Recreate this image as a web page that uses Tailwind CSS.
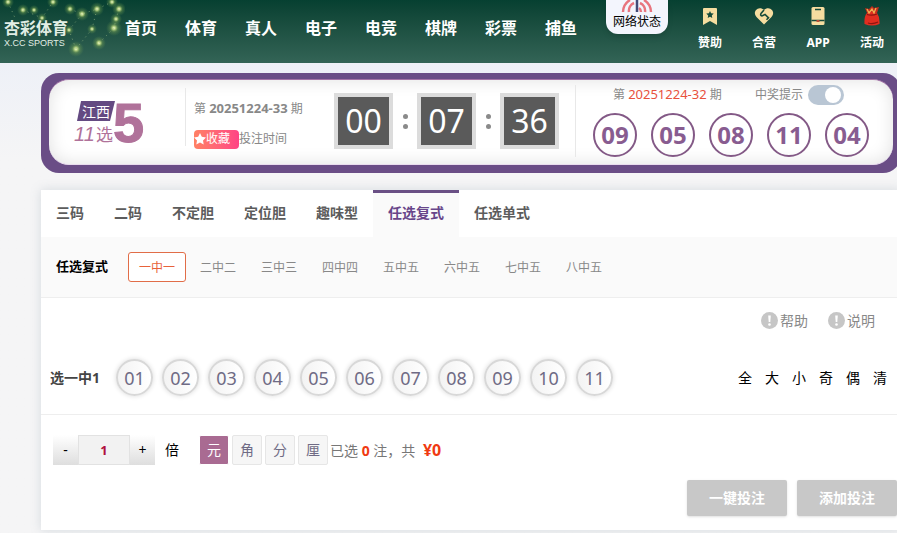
<!DOCTYPE html>
<html lang="zh-CN">
<head>
<meta charset="utf-8">
<meta name="viewport" content="width=device-width, initial-scale=1">
<title>江西11选5</title>
<script src="https://cdn.jsdelivr.net/npm/@tailwindcss/browser@4"></script>
</head>
<body class="min-h-screen overflow-x-hidden bg-linear-to-b from-[#edf0f7] from-10% to-[#f5f5f6] to-30% text-sm leading-5 text-[#888] [font-family:'Noto_Sans','Noto_Sans_CJK_SC',sans-serif]">

<header class="relative flex h-[63px] items-start bg-linear-to-b from-[#064031] to-[#336456] text-white">
  <svg class="absolute left-0 top-0" width="125" height="60" viewBox="0 0 125 60" aria-hidden="true">
    <defs><radialGradient id="glow"><stop offset="0" stop-color="#f4ffd0"/><stop offset=".22" stop-color="#c5df88" stop-opacity=".85"/><stop offset=".5" stop-color="#8cb558" stop-opacity=".35"/><stop offset="1" stop-color="#6fa050" stop-opacity="0"/></radialGradient></defs>
    <g fill="url(#glow)">
      <circle cx="8" cy="2" r="6"/><circle cx="23" cy="10" r="6"/><circle cx="34" cy="10" r="5"/><circle cx="53" cy="2" r="6"/><circle cx="42" cy="18" r="5"/><circle cx="70" cy="9" r="6"/><circle cx="82" cy="14" r="7"/><circle cx="97" cy="9" r="7"/><circle cx="112" cy="2" r="6"/><circle cx="119" cy="9" r="7"/><circle cx="116" cy="19" r="6"/><circle cx="114" cy="28" r="8"/><circle cx="99" cy="43" r="7"/><circle cx="76" cy="49" r="8"/><circle cx="92" cy="29" r="5"/><circle cx="69" cy="30" r="5"/>
    </g>
    <g fill="none" stroke="#a9c58d" stroke-opacity=".6" stroke-dasharray="1 4">
      <path d="M8 2 15 18M23 10 42 18 53 2M70 9 82 14 97 9 112 2M76 49 69 30 82 14M76 49 92 29 97 9M99 43 114 28 116 19 119 9"/>
    </g>
  </svg>
  <a href="#" class="relative mt-[18px] ml-1 w-[121px] shrink-0">
    <span class="block text-base leading-5 font-bold text-[#e2eee5]">杏彩体育</span>
    <span class="block text-[9px] leading-[10px] text-[#e2eee5] [font-family:'Liberation_Sans',sans-serif]">X.CC SPORTS</span>
  </a>
  <nav class="mt-4 flex gap-7 text-base leading-6 font-bold whitespace-nowrap">
    <a href="#">首页</a><a href="#">体育</a><a href="#">真人</a><a href="#">电子</a><a href="#">电竞</a><a href="#">棋牌</a><a href="#">彩票</a><a href="#">捕鱼</a>
  </nav>
  <div class="-mr-[2px] ml-auto flex shrink-0">
    <a href="#" class="mr-[15px] flex h-[34px] w-[62px] flex-col items-center justify-between rounded-b-xl bg-[#f3f5fd] pb-1 text-xs leading-4 text-black shadow-md">
      <svg width="32" height="13" viewBox="0 0 32 13" fill="none" aria-hidden="true">
        <path d="M2 12A14.500 14.500 0 0 1 9 0M8 12A8.500 8.500 0 0 1 13 3M30 12A14.500 14.500 0 0 0 23 0M24 12A8.500 8.500 0 0 0 19 3M20 12A5 5 0 0 0 18 8" stroke="#e8747e" stroke-width="2.500"/>
        <path d="M16 0v12" stroke="#414b78" stroke-width="2.500"/>
      </svg>
      网络状态
    </a>
    <a href="#" class="flex w-[54px] flex-col items-center gap-[9px] pt-[6px] text-xs leading-4 font-bold">
      <svg width="20" height="20" viewBox="0 0 20 20" aria-hidden="true"><path d="M3 3q0-1 1-1h12q1 0 1 1v16l-7-4-7 4z" fill="#f6dda0"/><path d="m10 5 1.100 2.300 2.600.3-1.900 1.800.5 2.600-2.300-1.300L7.700 12l.5-2.600-1.900-1.800 2.600-.3z" fill="#174b3b"/></svg>赞助
    </a>
    <a href="#" class="flex w-[54px] flex-col items-center gap-[9px] pt-[6px] text-xs leading-4 font-bold">
      <svg width="20" height="20" viewBox="0 0 20 20" aria-hidden="true"><path d="M10 18.500 2.500 11Q-.5 7.500 1.800 4.200C4 1.500 7.500 1.500 10 4c2.500-2.500 6-2.500 8.200.2Q20.500 7.500 17.500 11z" fill="#f6dda0"/><path d="M10 4 7 7.500q-1 2 1 2.400l3-1.400 3.500 3.300-2 2" fill="none" stroke="#174b3b" stroke-width="1.600"/></svg>合营
    </a>
    <a href="#" class="flex w-[54px] flex-col items-center gap-[9px] pt-[6px] text-xs leading-4 font-bold">
      <svg width="20" height="20" viewBox="0 0 20 20" aria-hidden="true"><rect x="3.500" y="1" width="13" height="18" rx="1.500" fill="#f6dda0"/><path d="M7 3.500h6M3.500 14.500h13" stroke="#174b3b" stroke-width="1.400"/><path d="M8.500 14h3v2h-3z" fill="#b8503a"/></svg>APP
    </a>
    <a href="#" class="flex w-[54px] flex-col items-center gap-[9px] pt-[6px] text-xs leading-4 font-bold">
      <svg width="20" height="20" viewBox="0 0 20 20" aria-hidden="true"><path d="M5 7 3 2l4 1 3-3 2 2 5-1-2 6z" fill="#c32b1c"/><path d="M5 7q5-2 10 0 3 4 2.500 11Q10 21 2.500 18 2 10 5 7z" fill="#e12d20"/><path d="m5 3 2 4 3-4 2 4 2-5" fill="none" stroke="#efb052" stroke-width="1.300"/><path d="M5 8.500q5 1.500 10-.5M6 17q5 1.500 10-1" fill="none" stroke="#8e1510" stroke-width="1.300"/></svg>活动
    </a>
  </div>
</header>

<main class="mt-[10px] -mr-1 ml-[41px]">
  <section class="rounded-[18px] bg-[#6a4d86] px-2 pt-[6px] pb-2">
    <div class="flex h-[86px] items-start rounded-[20px] border-y border-t-[#a273a6] border-b-[#e9dcee] bg-white shadow-[inset_0_0_18px_rgba(0,0,0,0.12)]">
      <div class="mt-2 flex h-[58px] w-[137px] shrink-0 items-center border-r border-[#e8e8e8] pt-3 pl-[26px]">
        <svg class="overflow-visible" width="72" height="50" viewBox="0 0 72 50" role="img" aria-label="江西11选5">
          <path d="M6 3h34l-5 20H2z" fill="#644a82"/>
          <text x="7" y="19" font-size="14" fill="#fff" font-family="Noto Sans CJK SC, sans-serif">江西</text>
          <text x="-1" y="43" font-size="20" font-style="italic" fill="#b0729a" font-family="Liberation Sans, sans-serif">11</text>
          <text x="21" y="43" font-size="17" fill="#b0729a" font-family="Noto Sans CJK SC, sans-serif">选</text>
          <text x="38" y="44" font-size="56" font-weight="bold" fill="#b0729a" stroke="#b0729a" stroke-width="1" font-family="Liberation Sans, sans-serif">5</text>
        </svg>
      </div>
      <div class="w-[148px] shrink-0 pt-[18px] pl-2 text-[12px]">
        <p class="whitespace-nowrap">第 <b class="text-[13px]">20251224-33</b> 期</p>
        <p class="mt-[10px] flex items-center whitespace-nowrap">
          <button class="flex h-[19px] w-[45px] items-center rounded-sm bg-linear-to-r from-[#ff8064] to-[#ff4385] text-white">
            <svg width="12" height="12" viewBox="0 0 12 12" fill="#fff" aria-hidden="true"><path d="m6 0 1.800 3.800 4.200.6-3 3 .7 4.200L6 9.600l-3.700 2 .7-4.200-3-3 4.200-.6z"/></svg>收藏
          </button>投注时间
        </p>
      </div>
      <div class="mt-[13px] flex w-[241px] shrink-0 items-center text-[32px] leading-[48px] text-white" role="timer">
        <span class="h-14 w-[59px] border-4 border-[#dcdcdc] bg-[#5a5a5a] text-center">00</span>
        <span class="flex w-6 flex-col items-center gap-[5px]"><i class="size-[5px] rounded-full bg-[#8a8a8a]"></i><i class="size-[5px] rounded-full bg-[#8a8a8a]"></i></span>
        <span class="h-14 w-[59px] border-4 border-[#dcdcdc] bg-[#5a5a5a] text-center">07</span>
        <span class="flex w-6 flex-col items-center gap-[5px]"><i class="size-[5px] rounded-full bg-[#8a8a8a]"></i><i class="size-[5px] rounded-full bg-[#8a8a8a]"></i></span>
        <span class="h-14 w-[59px] border-4 border-[#dcdcdc] bg-[#5a5a5a] text-center">36</span>
      </div>
      <div class="mt-[5px] border-l border-[#e8e8e8] pl-[17px]">
        <div class="flex h-5 items-center pl-5 text-xs whitespace-nowrap">
          <p class="w-[142px]">第 <span class="text-[13px] text-[#e8513c]">20251224-32</span> 期</p>
          <label for="win-tip" class="mr-[5px]">中奖提示</label>
          <input id="win-tip" type="checkbox" role="switch" checked class="h-5 w-9 appearance-none rounded-full bg-[#b9c6d4] before:mt-[2px] before:ml-[17px] before:block before:size-4 before:rounded-full before:bg-white">
        </div>
        <ul class="mt-2 flex gap-[14px] text-2xl leading-10 font-bold text-[#885c90]">
          <li class="size-11 rounded-full border-2 border-[#835986] text-center">09</li>
          <li class="size-11 rounded-full border-2 border-[#835986] text-center">05</li>
          <li class="size-11 rounded-full border-2 border-[#835986] text-center">08</li>
          <li class="size-11 rounded-full border-2 border-[#835986] text-center">11</li>
          <li class="size-11 rounded-full border-2 border-[#835986] text-center">04</li>
        </ul>
      </div>
    </div>
  </section>

  <section class="mt-[17px] bg-white pb-[14px] shadow-[0_0_10px_rgba(120,140,155,0.25)]">
    <nav class="flex h-[47px] font-bold whitespace-nowrap text-[#5c5c5c]">
      <a href="#" class="px-[15px] py-[13px]">三码</a>
      <a href="#" class="px-[15px] py-[13px]">二码</a>
      <a href="#" class="px-[15px] py-[13px]">不定胆</a>
      <a href="#" class="px-[15px] py-[13px]">定位胆</a>
      <a href="#" class="px-[15px] py-[13px]">趣味型</a>
      <a href="#" aria-current="page" class="border-t-3 border-[#6a5085] bg-[#fafafa] px-[15px] py-[10px] text-[#68468a]">任选复式</a>
      <a href="#" class="px-[15px] py-[13px]">任选单式</a>
    </nav>
    <div class="flex h-[61px] items-center gap-[3px] border-b border-[#eeeeee] bg-[#fafafa] pl-[15px] text-xs whitespace-nowrap">
      <b class="w-[69px] text-[13px] text-black">任选复式</b>
      <button class="h-[30px] w-[58px] rounded-[3px] border border-[#e16d48] bg-white pt-[2px] text-[#e8623a]">一中一</button>
      <button class="h-[30px] w-[58px] pt-[2px]">二中二</button>
      <button class="h-[30px] w-[58px] pt-[2px]">三中三</button>
      <button class="h-[30px] w-[58px] pt-[2px]">四中四</button>
      <button class="h-[30px] w-[58px] pt-[2px]">五中五</button>
      <button class="h-[30px] w-[58px] pt-[2px]">六中五</button>
      <button class="h-[30px] w-[58px] pt-[2px]">七中五</button>
      <button class="h-[30px] w-[58px] pt-[2px]">八中五</button>
    </div>
    <div class="flex h-[45px] items-center justify-end gap-5 pr-[26px]">
      <a href="#" class="flex items-center gap-[2px]"><svg width="17" height="17" viewBox="0 0 17 17" aria-hidden="true"><circle cx="8.500" cy="8.500" r="8.500" fill="#c6c6c6"/><path d="M7.200 3.500h2.600l-.5 6.500H7.700z" fill="#fff"/><circle cx="8.500" cy="12.500" r="1.300" fill="#fff"/></svg>帮助</a>
      <a href="#" class="flex items-center gap-[2px]"><svg width="17" height="17" viewBox="0 0 17 17" aria-hidden="true"><circle cx="8.500" cy="8.500" r="8.500" fill="#c6c6c6"/><path d="M7.200 3.500h2.600l-.5 6.500H7.700z" fill="#fff"/><circle cx="8.500" cy="12.500" r="1.300" fill="#fff"/></svg>说明</a>
    </div>
    <div class="flex h-[72px] items-center border-b border-[#eeeeee] pr-[14px] pb-[2px] pl-[9px]">
      <b class="w-[66px] text-[#444]">选一中1</b>
      <div class="flex gap-[9px] text-lg leading-none text-[#6f6b85] [&>button]:size-[37px] [&>button]:rounded-full [&>button]:border-2 [&>button]:border-[#d8d8d8] [&>button]:bg-linear-to-r [&>button]:from-[#f3f3f3] [&>button]:to-white [&>button]:shadow-[0_0_5px_rgba(0,0,0,0.15)]">
        <button>01</button><button>02</button><button>03</button><button>04</button><button>05</button><button>06</button><button>07</button><button>08</button><button>09</button><button>10</button><button>11</button>
      </div>
      <div class="ml-auto flex gap-[13px] text-black">
        <button>全</button><button>大</button><button>小</button><button>奇</button><button>偶</button><button>清</button>
      </div>
    </div>
    <div class="flex items-center pt-5 pl-3 whitespace-nowrap">
      <button class="h-[30px] w-[25px] bg-linear-to-b from-white to-[#dedede] text-black" aria-label="减少">-</button>
      <input type="text" value="1" aria-label="倍数" class="h-[30px] w-[52px] border border-[#e2e2e2] bg-[#f2f2f2] text-center text-[13px] font-bold text-[#b0103f]">
      <button class="h-[30px] w-[25px] bg-linear-to-b from-white to-[#dedede] text-black" aria-label="增加">+</button>
      <span class="ml-[10px] w-[34px] text-black">倍</span>
      <div class="flex gap-[3px] text-[#6f6b85]">
        <button class="size-[30px] rounded-xs border border-white bg-[#a96b92] text-white">元</button>
        <button class="size-[30px] rounded-xs border border-[#e6e6e6] bg-[#f6f6f6]">角</button>
        <button class="size-[30px] rounded-xs border border-[#e6e6e6] bg-[#f6f6f6]">分</button>
        <button class="size-[30px] rounded-xs border border-[#e6e6e6] bg-[#f6f6f6]">厘</button>
      </div>
      <p class="ml-[2px] text-[#777]">已选 <b class="text-[#f03a12]">0</b> 注，共 <b class="ml-1 text-base text-[#f03a12]">¥0</b></p>
    </div>
    <div class="mt-[15px] flex justify-end gap-[10px] pr-1 font-bold text-white">
      <button class="h-9 w-[100px] rounded-xs bg-[#c8c8c8] shadow-sm">一键投注</button>
      <button class="h-9 w-[100px] rounded-xs bg-[#c8c8c8] shadow-sm">添加投注</button>
    </div>
  </section>
</main>
</body>
</html>
